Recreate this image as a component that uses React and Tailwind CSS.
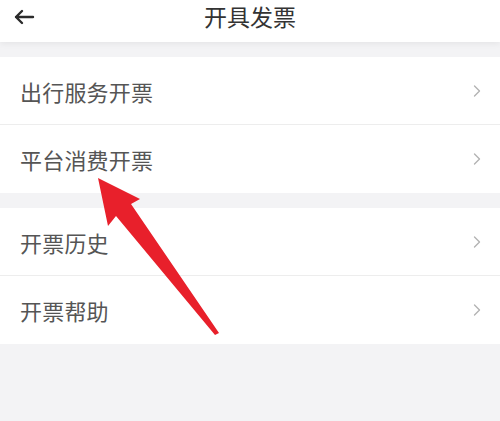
const rows = [
  ['出行服务开票', '平台消费开票'],
  ['开票历史', '开票帮助'],
];

function Chevron() {
  return (
    <svg width="10" height="14" viewBox="0 0 10 14" fill="none" className="shrink-0">
      <path d="M2.5 2l5 5-5 5" stroke="#b3b3b3" strokeWidth="1.4" strokeLinecap="round" strokeLinejoin="round" />
    </svg>
  );
}

function Row({ label, last }) {
  return (
    <div className={`flex items-center justify-between h-[68px] pl-5 pr-[18px] bg-white ${last ? '' : 'border-b border-[#ededed]'}`}>
      <span className="text-[22px] text-[#555] leading-none tracking-[0.2px]">{label}</span>
      <Chevron />
    </div>
  );
}

export default function App() {
  return (
    <div
      className="relative w-[500px] h-[421px] overflow-hidden bg-[#f3f3f5]"
      style={{ fontFamily: '"Noto Sans CJK SC", "Noto Sans", sans-serif' }}
    >
      <div className="relative flex items-center justify-center h-[42px] bg-white shadow-[0_2px_6px_rgba(0,0,0,0.06)] z-10">
        <svg width="22" height="16" viewBox="0 0 22 16" fill="none" className="absolute left-[13px] top-[9px]">
          <path d="M20 8H3M9 2L3 8l6 6" stroke="#2b2b2b" strokeWidth="2.4" strokeLinecap="round" strokeLinejoin="round" />
        </svg>
        <span className="text-[23px] text-[#333] leading-none -mt-[10px]">开具发票</span>
      </div>

      <div className="flex flex-col gap-[15px] pt-[15px]">
        {rows.map((group, gi) => (
          <div key={gi} className="flex flex-col">
            {group.map((label, i) => (
              <Row key={label} label={label} last={i === group.length - 1} />
            ))}
          </div>
        ))}
      </div>

      <svg width="500" height="421" viewBox="0 0 500 421" className="absolute inset-0 pointer-events-none z-20">
        <polygon
          points="98,178 140,199 131,204 219,333 215,335 116,216 108,226"
          fill="#e8202b"
        />
      </svg>
    </div>
  );
}
